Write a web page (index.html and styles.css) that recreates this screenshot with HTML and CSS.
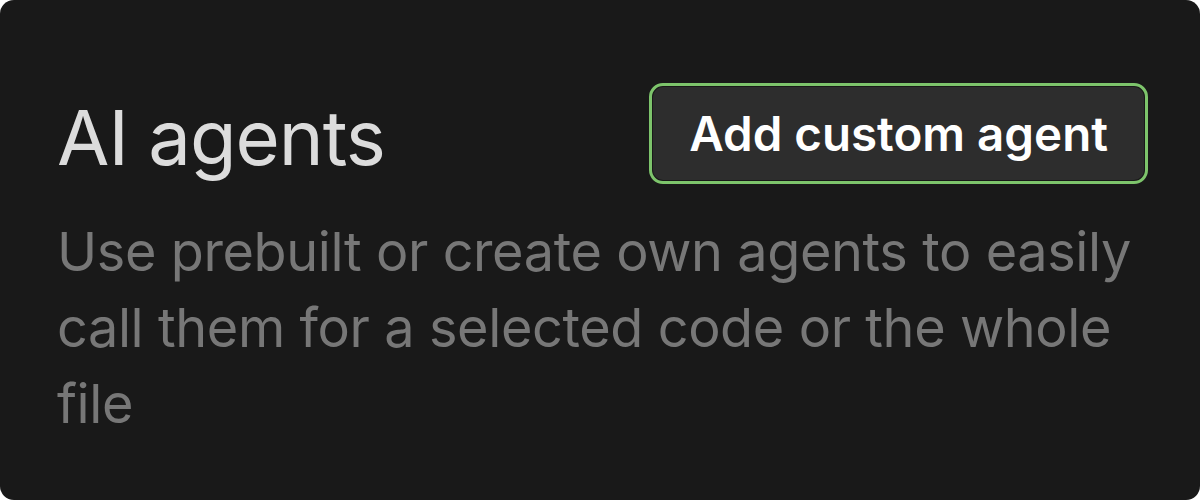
FILE: index.html
```html
<!DOCTYPE html>
<html lang="en">
<head>
    <meta charset="UTF-8">
    <title>AI agents</title>
    <link rel="stylesheet" href="styles.css">
</head>
<body>
    <div class="card">
        <div class="card-header">
            <h1 class="title">AI agents</h1>
            <button class="add-btn">Add custom agent</button>
        </div>
        <p class="description">Use prebuilt or create own agents to easily call them for a selected code or the whole file</p>
    </div>
</body>
</html>
```

FILE: styles.css
```css
body {
    margin: 0;
    background-color: #ffffff;
    font-family: Inter, "Noto Sans", sans-serif;
}

.card {
    box-sizing: border-box;
    height: 500px;
    background-color: #191919;
    border-radius: 14px;
    padding: 87px 56px 0 57px;
}

.card-header {
    display: flex;
    justify-content: space-between;
    align-items: flex-start;
}

.title {
    margin: 4px 0 0;
    font-size: 76px;
    font-weight: 400;
    color: #dcdcdc;
    letter-spacing: -1px;
}

.add-btn {
    font-family: inherit;
    font-size: 47.5px;
    font-weight: 600;
    color: #ffffff;
    background-color: #2d2d2d;
    border: none;
    border-radius: 10px;
    padding: 18px 36px;
    outline: 3px solid #7dc46b;
    outline-offset: 1px;
    cursor: pointer;
}

.description {
    margin: 31px 0 0;
    font-size: 54px;
    line-height: 76px;
    letter-spacing: -0.4px;
    color: #777777;
}
```
